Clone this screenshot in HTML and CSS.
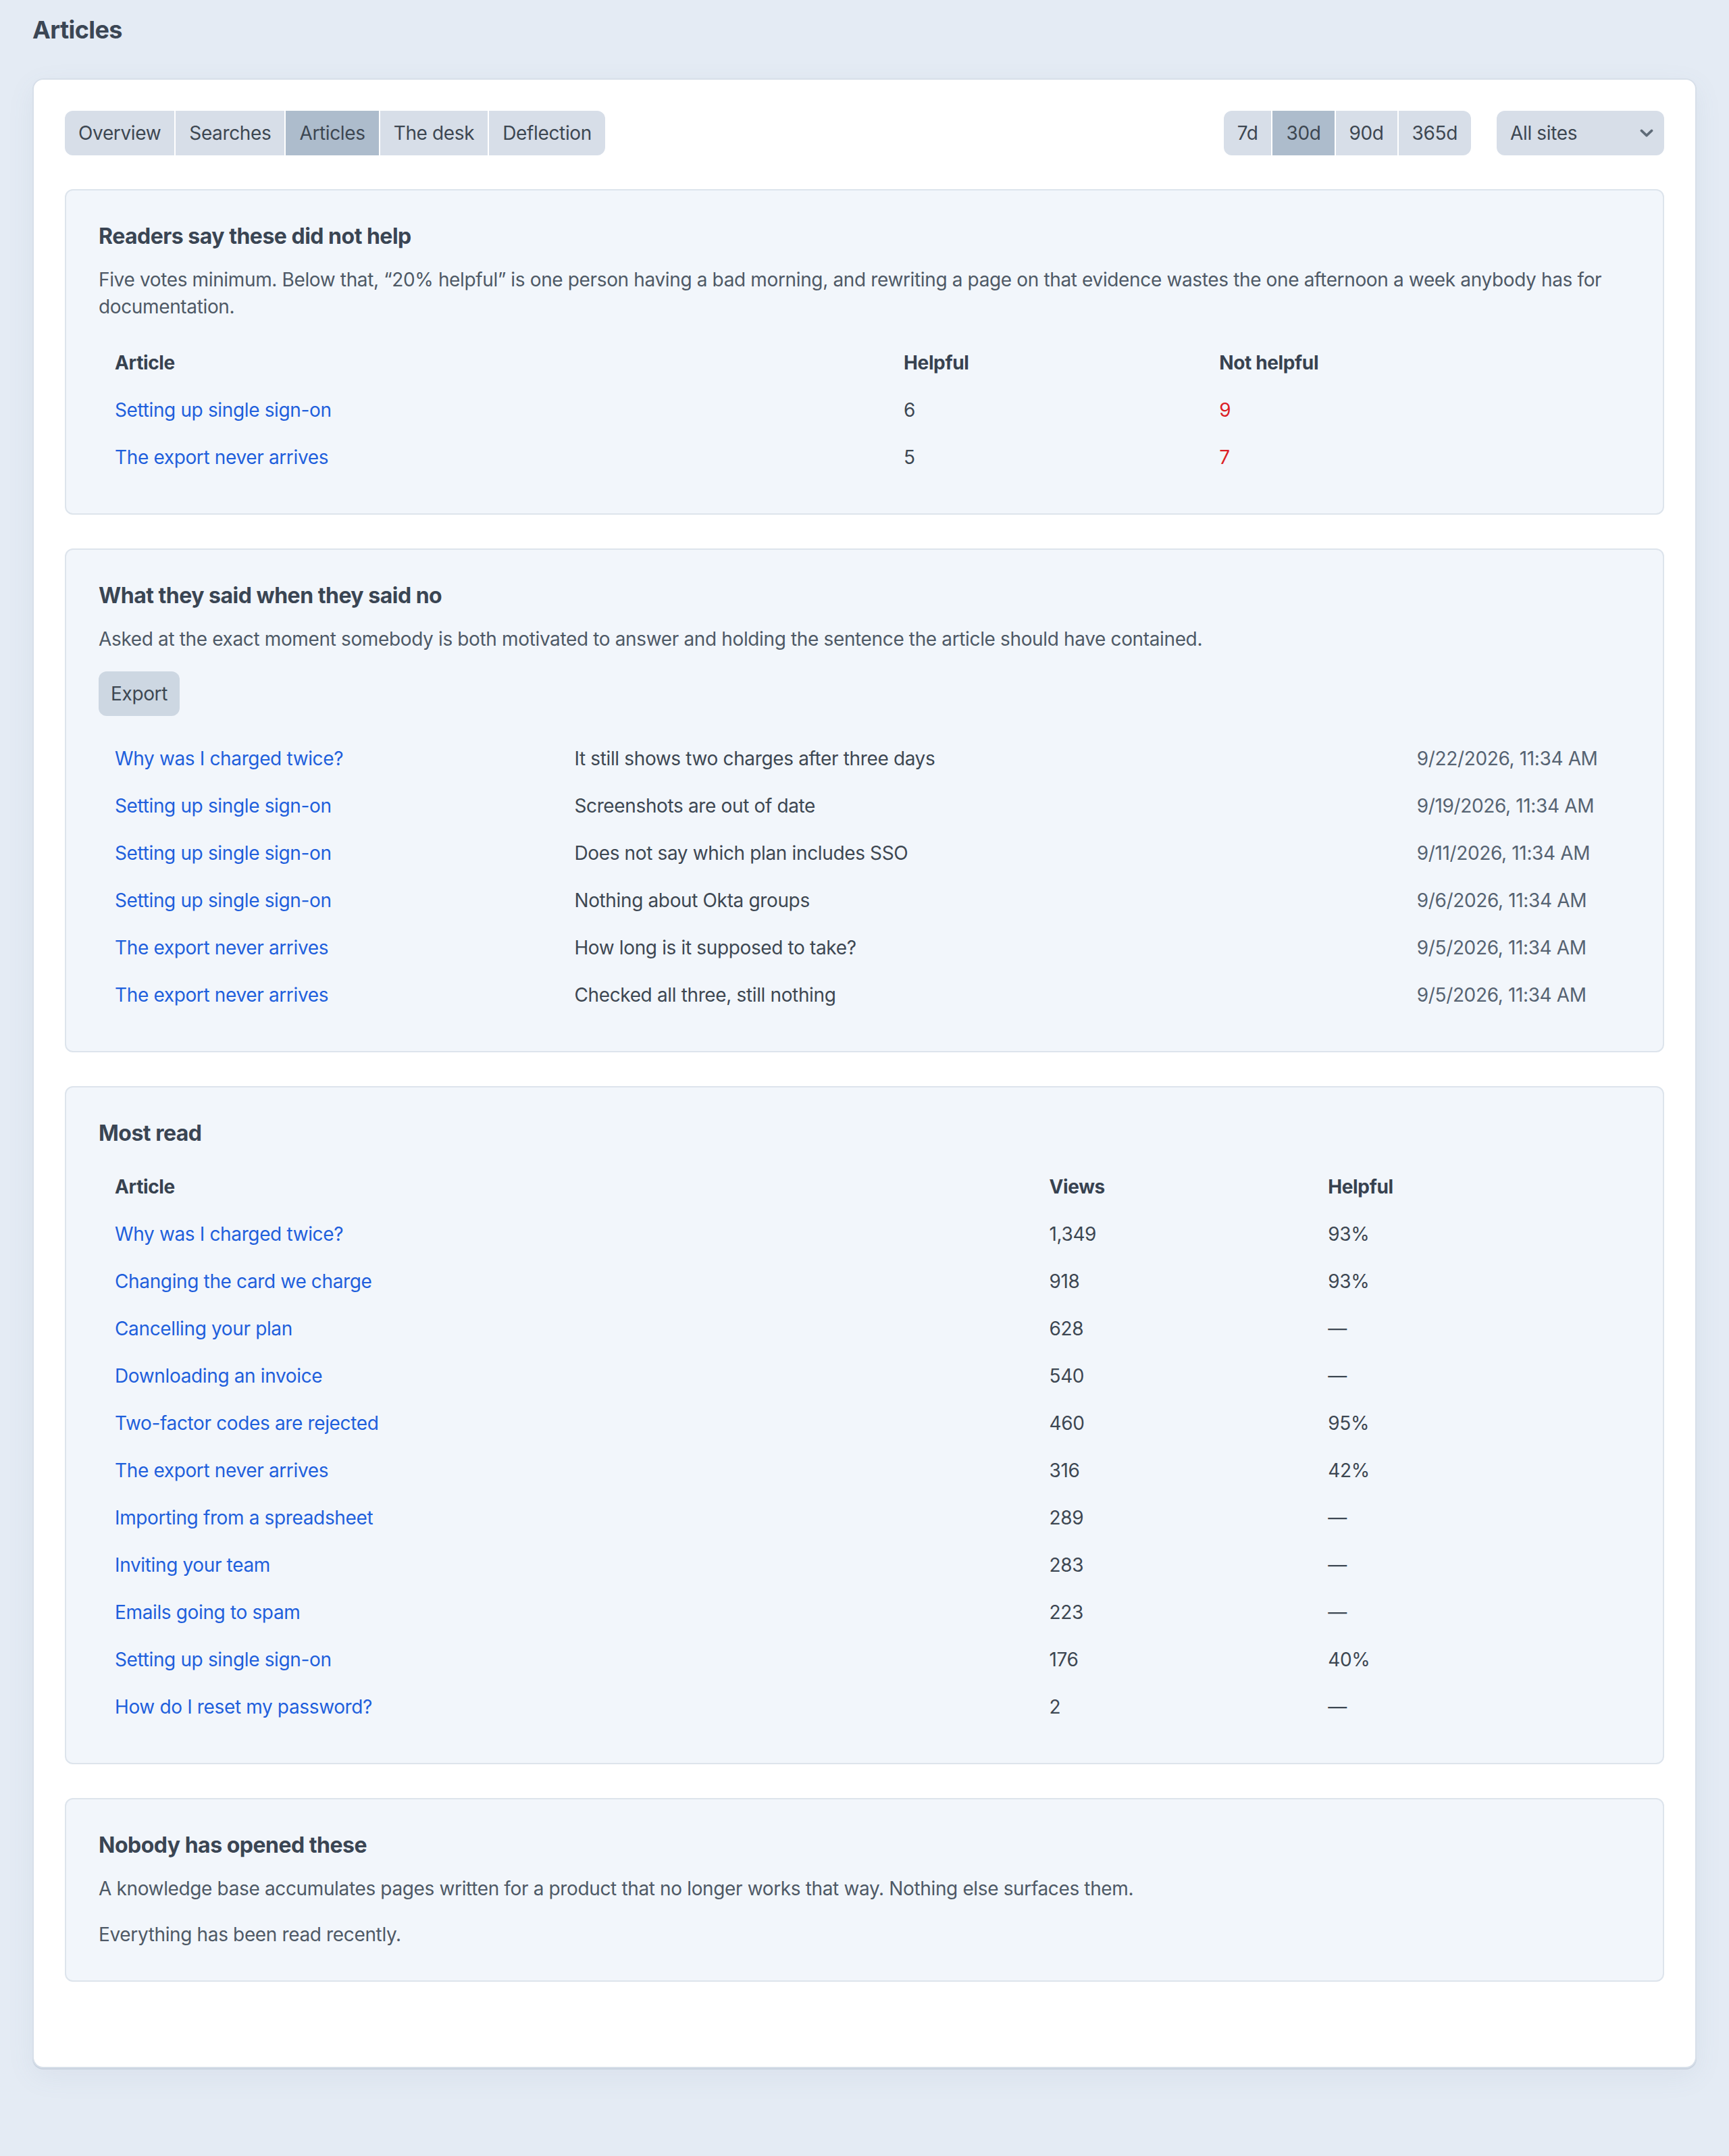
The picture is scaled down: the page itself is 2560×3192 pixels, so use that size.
FILE: index.html
```html
<!DOCTYPE html>
<html lang="en">
<head>
<meta charset="utf-8">
<title>Articles</title>
<link rel="stylesheet" href="styles.css">
</head>
<body>
<main class="page">
  <h1 class="page-title">Articles</h1>
  <section class="card">
    <div class="toolbar">
      <nav class="seg">
        <span class="seg-item">Overview</span>
        <span class="seg-item">Searches</span>
        <span class="seg-item is-active">Articles</span>
        <span class="seg-item">The desk</span>
        <span class="seg-item">Deflection</span>
      </nav>
      <div class="toolbar-right">
        <div class="seg">
          <span class="seg-item">7d</span>
          <span class="seg-item is-active">30d</span>
          <span class="seg-item">90d</span>
          <span class="seg-item">365d</span>
        </div>
        <div class="select">
          <span>All sites</span>
          <svg class="chev" width="10" height="6" viewBox="0 0 10 6" aria-hidden="true"><path d="M1.2 1.2 L5 4.8 L8.8 1.2" fill="none" stroke="#5f6b78" stroke-width="1.8" stroke-linecap="round" stroke-linejoin="round"/></svg>
        </div>
      </div>
    </div>

    <div class="panel">
      <h2 class="panel-title">Readers say these did not help</h2>
      <p class="panel-text">Five votes minimum. Below that, “20% helpful” is one person having a bad morning, and rewriting a page on that evidence wastes the one afternoon a week anybody has for documentation.</p>
      <table class="tbl">
        <colgroup><col class="c-a1"><col class="c-a2"><col></colgroup>
        <thead><tr><th>Article</th><th>Helpful</th><th>Not helpful</th></tr></thead>
        <tbody>
          <tr><td><a class="link">Setting up single sign-on</a></td><td>6</td><td class="bad">9</td></tr>
          <tr><td><a class="link">The export never arrives</a></td><td>5</td><td class="bad">7</td></tr>
        </tbody>
      </table>
    </div>

    <div class="panel">
      <h2 class="panel-title">What they said when they said no</h2>
      <p class="panel-text">Asked at the exact moment somebody is both motivated to answer and holding the sentence the article should have contained.</p>
      <button class="btn" type="button">Export</button>
      <table class="tbl">
        <colgroup><col class="c-b1"><col class="c-b2"><col></colgroup>
        <tbody>
          <tr><td><a class="link">Why was I charged twice?</a></td><td>It still shows two charges after three days</td><td class="date">9/22/2026, 11:34 AM</td></tr>
          <tr><td><a class="link">Setting up single sign-on</a></td><td>Screenshots are out of date</td><td class="date">9/19/2026, 11:34 AM</td></tr>
          <tr><td><a class="link">Setting up single sign-on</a></td><td>Does not say which plan includes SSO</td><td class="date">9/11/2026, 11:34 AM</td></tr>
          <tr><td><a class="link">Setting up single sign-on</a></td><td>Nothing about Okta groups</td><td class="date">9/6/2026, 11:34 AM</td></tr>
          <tr><td><a class="link">The export never arrives</a></td><td>How long is it supposed to take?</td><td class="date">9/5/2026, 11:34 AM</td></tr>
          <tr><td><a class="link">The export never arrives</a></td><td>Checked all three, still nothing</td><td class="date">9/5/2026, 11:34 AM</td></tr>
        </tbody>
      </table>
    </div>

    <div class="panel">
      <h2 class="panel-title">Most read</h2>
      <table class="tbl">
        <colgroup><col class="c-c1"><col class="c-c2"><col></colgroup>
        <thead><tr><th>Article</th><th>Views</th><th>Helpful</th></tr></thead>
        <tbody>
          <tr><td><a class="link">Why was I charged twice?</a></td><td>1,349</td><td>93%</td></tr>
          <tr><td><a class="link">Changing the card we charge</a></td><td>918</td><td>93%</td></tr>
          <tr><td><a class="link">Cancelling your plan</a></td><td>628</td><td>—</td></tr>
          <tr><td><a class="link">Downloading an invoice</a></td><td>540</td><td>—</td></tr>
          <tr><td><a class="link">Two-factor codes are rejected</a></td><td>460</td><td>95%</td></tr>
          <tr><td><a class="link">The export never arrives</a></td><td>316</td><td>42%</td></tr>
          <tr><td><a class="link">Importing from a spreadsheet</a></td><td>289</td><td>—</td></tr>
          <tr><td><a class="link">Inviting your team</a></td><td>283</td><td>—</td></tr>
          <tr><td><a class="link">Emails going to spam</a></td><td>223</td><td>—</td></tr>
          <tr><td><a class="link">Setting up single sign-on</a></td><td>176</td><td>40%</td></tr>
          <tr><td><a class="link">How do I reset my password?</a></td><td>2</td><td>—</td></tr>
        </tbody>
      </table>
    </div>

    <div class="panel">
      <h2 class="panel-title">Nobody has opened these</h2>
      <p class="panel-text">A knowledge base accumulates pages written for a product that no longer works that way. Nothing else surfaces them.</p>
      <p class="panel-text last">Everything has been read recently.</p>
    </div>
  </section>
</main>
</body>
</html>
```
FILE: styles.css
```css
html {
  zoom: 2;
  background: #e4ebf4;
}

body {
  margin: 0;
  font-family: Inter, "Noto Sans", "Liberation Sans", sans-serif;
  font-size: 14px;
  line-height: 20px;
  letter-spacing: -0.18px;
  color: #3d4752;
}

.page {
  padding: 10px 24px 24px;
}

.page-title {
  margin: 0 0 24px;
  font-size: 18px;
  line-height: 24px;
  font-weight: 700;
  letter-spacing: -0.3px;
  color: #3b4654;
}

.card {
  background: #ffffff;
  border: 1px solid #d7dfe9;
  border-radius: 8px;
  padding: 23px 23px 63px;
  box-shadow: 0 1px 0 #c9d3df, 0 6px 20px rgba(90, 110, 140, 0.08);
}

.toolbar {
  display: flex;
  align-items: center;
  margin-bottom: 25px;
}

.toolbar-right {
  margin-left: auto;
  display: flex;
  align-items: center;
  gap: 19px;
}

.seg {
  display: flex;
  gap: 1px;
  border-radius: 6px;
  overflow: hidden;
}

.seg-item {
  display: block;
  padding: 6px 10px;
  line-height: 21px;
  background: #d7dee8;
  color: #3d4752;
}

.seg-item.is-active {
  background: #adbccc;
}

.select {
  display: flex;
  align-items: center;
  justify-content: space-between;
  width: 124px;
  box-sizing: border-box;
  padding: 6px 8px 6px 10px;
  line-height: 21px;
  background: #d7dee8;
  border-radius: 6px;
  color: #3d4752;
}

.chev {
  display: block;
}

.panel {
  background: #f2f6fb;
  border: 1px solid #dde4ec;
  border-radius: 6px;
  padding: 24px;
  margin-bottom: 25px;
}

.panel:last-child {
  margin-bottom: 0;
}

.panel-title {
  margin: 0 0 12px;
  font-size: 16px;
  line-height: 20px;
  font-weight: 700;
  letter-spacing: -0.25px;
  color: #3a4553;
}

.panel-text {
  margin: 0 0 14px;
  color: #4e5966;
}

.panel-text.last {
  margin-bottom: 0;
}

.btn {
  display: block;
  margin: 0 0 14px;
  padding: 6px 9px;
  font: inherit;
  letter-spacing: inherit;
  line-height: 21px;
  color: #3d4752;
  background: #cdd7e2;
  border: 0;
  border-radius: 6px;
}

.tbl {
  width: 100%;
  table-layout: fixed;
  border-collapse: collapse;
}

.c-a1 { width: 51.5%; }
.c-a2 { width: 20.6%; }
.c-b1 { width: 30%; }
.c-b2 { width: 55%; }
.c-c1 { width: 61%; }
.c-c2 { width: 18.2%; }

.tbl th,
.tbl td {
  padding: 7px 12px;
  line-height: 21px;
  text-align: left;
  vertical-align: middle;
  white-space: nowrap;
}

.tbl th {
  font-weight: 700;
  color: #374250;
}

.tbl td {
  color: #3d4752;
}

.link {
  color: #1f5fdc;
  text-decoration: none;
}

.tbl td.bad {
  color: #dc1f26;
}

.tbl td.date {
  color: #566372;
}
```
